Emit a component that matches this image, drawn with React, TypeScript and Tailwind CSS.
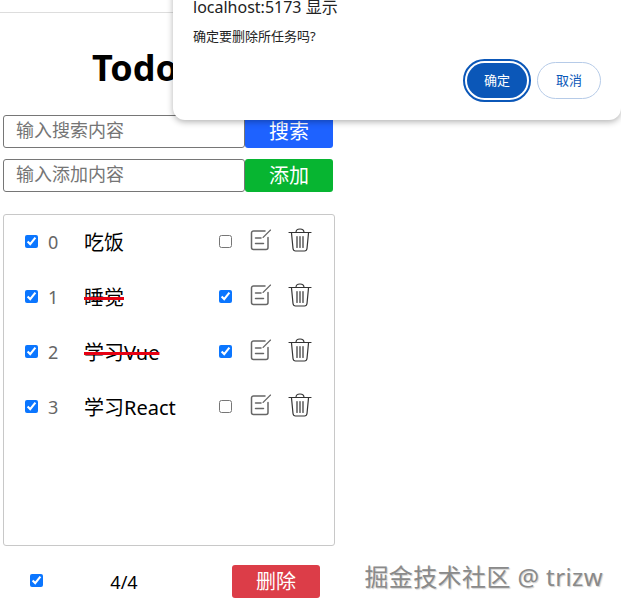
const tasks = [
  { id: 0, name: "吃饭", done: false },
  { id: 1, name: "睡觉", done: true },
  { id: 2, name: "学习Vue", done: true },
  { id: 3, name: "学习React", done: false },
];

const EditIcon = () => (
  <svg width="22" height="22" viewBox="0 0 22 22" fill="none" stroke="#666" strokeWidth="1.5" strokeLinecap="round" strokeLinejoin="round">
    <path d="M15 2H3.500a2 2 0 0 0-2 2v14.500a2 2 0 0 0 2 2h12.500a2 2 0 0 0 2-2V8.500" />
    <path d="M5.500 9h5.500M5.500 14.500h8" />
    <path d="M13 8.500L20.500 1" strokeWidth="1.1" />
  </svg>
);

const TrashIcon = () => (
  <svg width="24" height="24" viewBox="0 0 24 24" fill="none" stroke="#333" strokeWidth="1.2" strokeLinecap="round" strokeLinejoin="round">
    <path d="M1 4.500h22" />
    <path d="M8 4.500C8 2 9 1 12 1s4 1 4 3.500" />
    <path d="M3.500 5l1.500 15.500c.2 1.500 1 2.500 2.500 2.500h9c1.500 0 2.300-1 2.500-2.500L20.500 5" />
    <path d="M9 8.500v11M12 8.500v11M15 8.500v11" />
  </svg>
);

const SearchRow = ({ placeholder, label, color }: { placeholder: string; label: string; color: string }) => (
  <div className="flex h-[33px] w-[330px]">
    <input
      placeholder={placeholder}
      className="w-[242px] h-full border border-[#767676] rounded-[3px] pl-3 pb-[3px] text-lg placeholder:text-[#757575] outline-none"
    />
    <button className={`w-[88px] h-full rounded-[3px] text-xl text-white ${color}`}>{label}</button>
  </div>
);

const TaskRow = ({ task }: { task: (typeof tasks)[number] }) => (
  <li className="flex items-center h-[55px] pl-[21px]">
    <input type="checkbox" defaultChecked className="w-[13px] h-[13px] m-0 -mt-[2px] accent-[#0b76ff]" />
    <span className="w-[46px] -mt-[2px] pl-[10px] text-lg text-[#666]">{task.id}</span>
    <span
      className={`w-[135px] text-xl text-black ${task.done ? "line-through decoration-[#e60012] decoration-[3px]" : ""}`}
    >
      <span>{task.name}</span>
    </span>
    <input type="checkbox" defaultChecked={task.done} className="w-[13px] h-[13px] m-0 -mt-[2px] accent-[#0b76ff]" />
    <span className="ml-[18px] -mt-[6px]">
      <EditIcon />
    </span>
    <span className="ml-[16px] -mt-[6px]">
      <TrashIcon />
    </span>
  </li>
);

const App = () => {
  return (
    <div className="relative w-[621px] h-[610px] overflow-hidden bg-white text-black font-['Noto_Sans','Noto_Sans_CJK_SC',sans-serif]">
      <div className="mt-3 border-t border-[#ddd] pl-[3px]">
        <h1 className="h-[102px] pt-[28px] pl-[89px] text-[36px] leading-[54px] font-bold">Todolist</h1>
        <div className="flex flex-col gap-[11px]">
          <SearchRow placeholder="输入搜索内容" label="搜索" color="bg-[#1e62ff]" />
          <SearchRow placeholder="输入添加内容" label="添加" color="bg-[#07b531]" />
        </div>
        <ul className="mt-[22px] w-[332px] h-[332px] border border-[#c8c8c8] rounded-[3px]">
          {tasks.map((task) => (
            <TaskRow key={task.id} task={task} />
          ))}
        </ul>
        <div className="flex items-center h-[33px] mt-[19px]">
          <input type="checkbox" defaultChecked className="ml-[27px] w-[13px] h-[13px] m-0 -mt-[3px] accent-[#0b76ff]" />
          <span className="w-[162px] text-center text-lg">4/4</span>
          <button className="ml-[27px] w-[88px] h-[33px] rounded-[3px] bg-[#dc3d48] text-xl text-white">删除</button>
        </div>
      </div>

      <div className="absolute right-[18px] top-[561px] text-2xl tracking-[0.4px] text-[#8a8a8a] [text-shadow:1px_1px_1px_#cfcfcf]">
        掘金技术社区 @ trizw
      </div>

      <div className="absolute left-[173px] top-[-12px] w-[448px] h-[132px] rounded-b-xl bg-white shadow-[0_2px_6px_rgba(0,0,0,0.3)] pl-5 pt-[8px]">
        <p className="text-base leading-[22px] text-[#222]">localhost:5173 显示</p>
        <p className="mt-[9px] text-[13px] leading-[18px] text-[#222]">确定要删除所任务吗?</p>
        <div className="absolute right-[20px] top-[71px] flex items-center gap-[6px]">
          <button className="w-[68px] h-[43px] rounded-full border-2 border-[#0b57b8] bg-white p-[2px]">
            <span className="flex items-center justify-center w-full h-full rounded-full bg-[#0b57b8] text-[13px] text-white">确定</span>
          </button>
          <button className="w-[64px] h-[37px] rounded-full border border-[#b6cbe8] bg-white text-[13px] text-[#0b57b8]">取消</button>
        </div>
      </div>
    </div>
  );
};

export default App;
